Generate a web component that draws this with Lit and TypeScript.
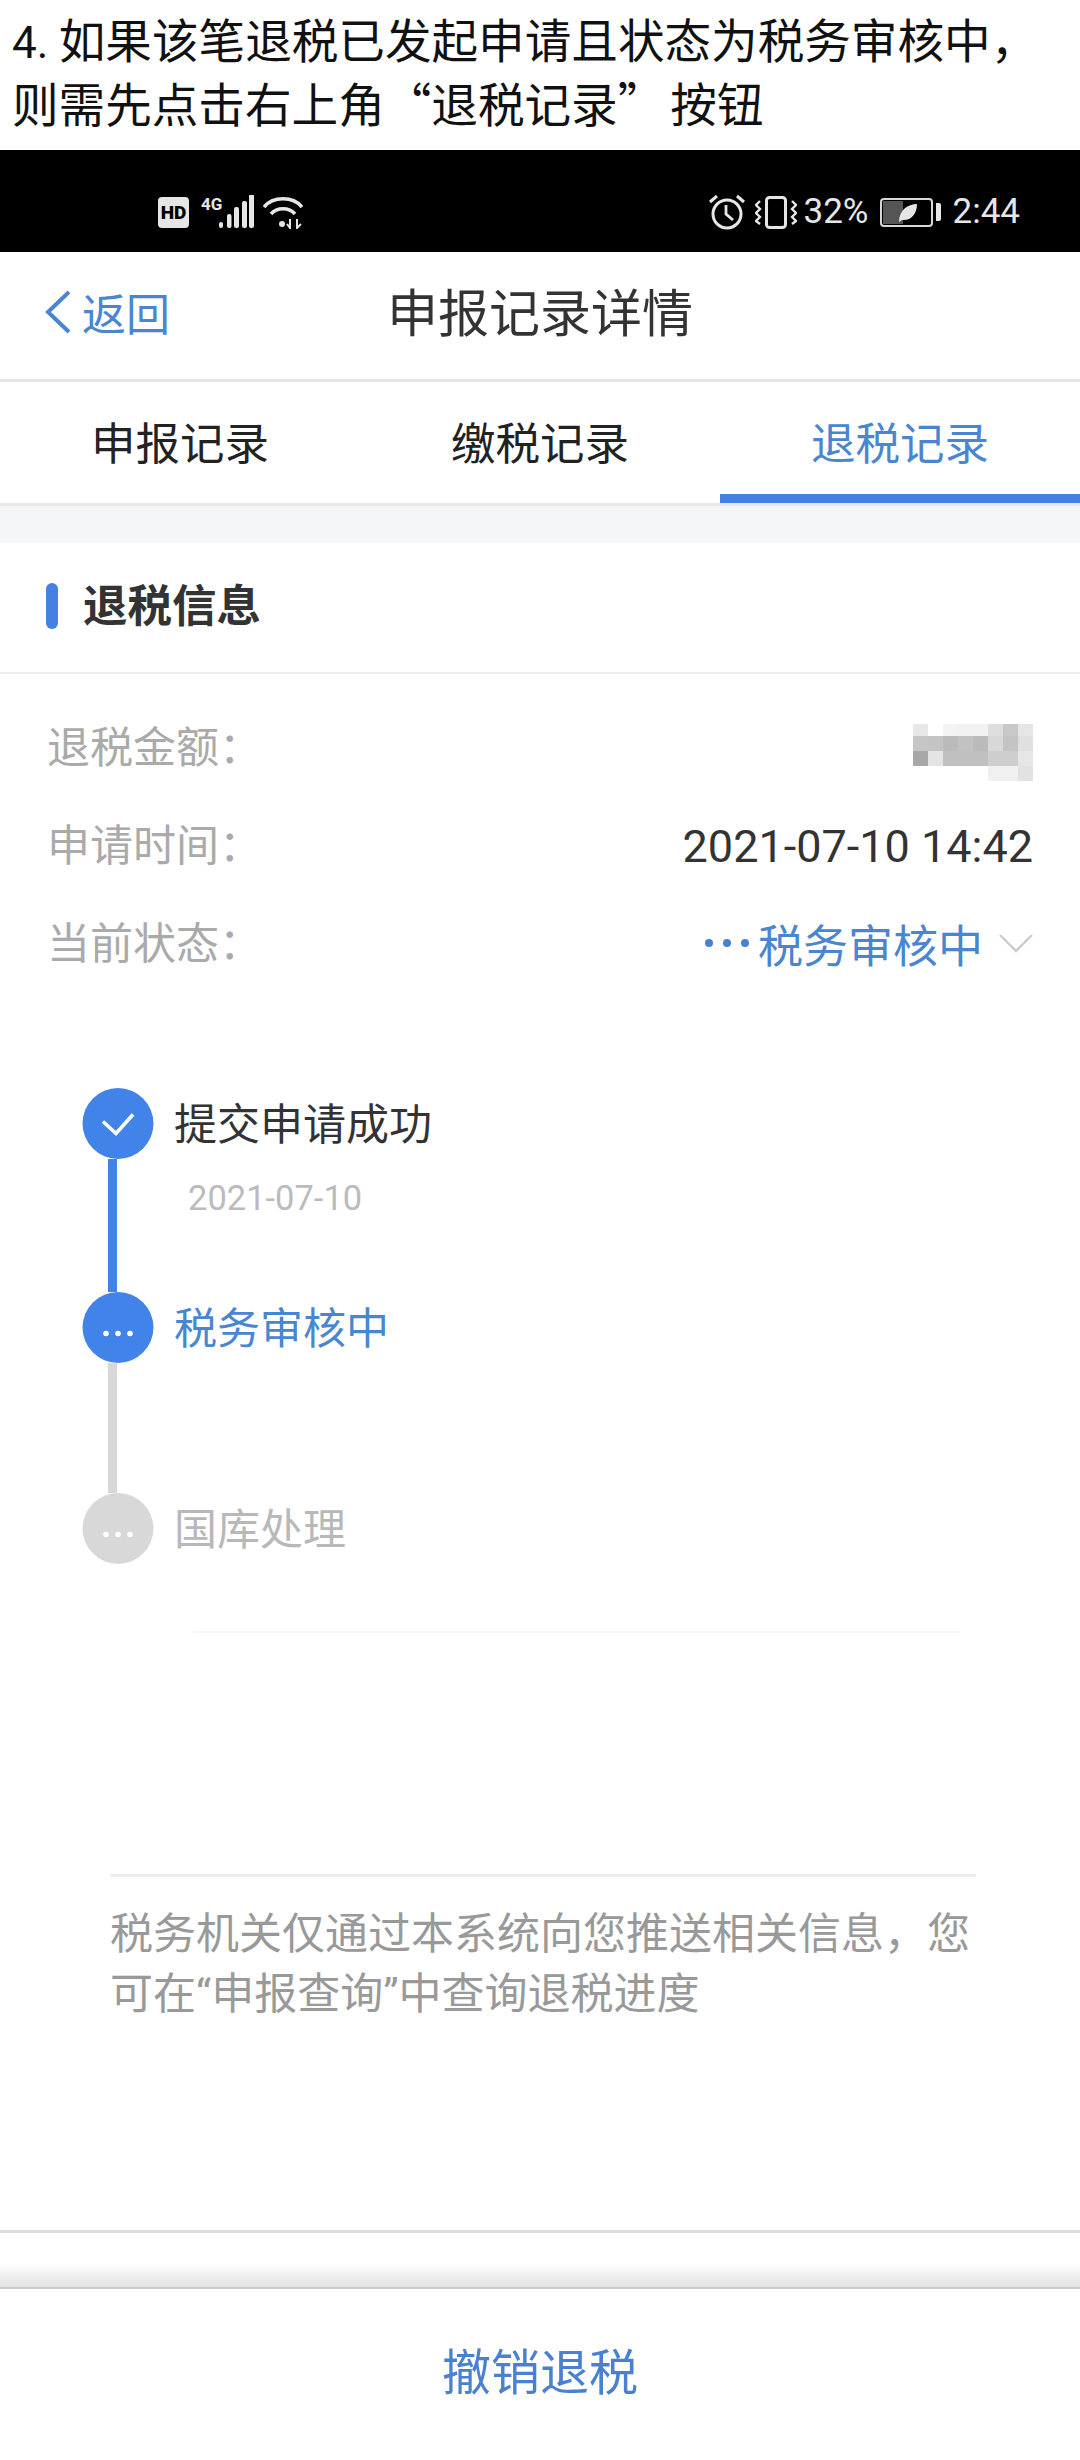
import { LitElement, css, html, svg } from 'lit';
import { customElement } from 'lit/decorators.js';

const mosaic = [
  ['#e8e8e8', '#ffffff', '#f4f4f4', '#f2f2f2', '#f2f2f2', '#dedede', '#c8c8c8', '#e6e6e6'],
  ['#c6c6c6', '#c4c4c4', '#bbbbbb', '#c2c2c2', '#bbbbbb', '#d8d8d8', '#c4c4c4', '#e0e0e0'],
  ['#a8a8a8', '#e4e4e4', '#c0c0c0', '#c0c0c0', '#c0c0c0', '#cecece', '#cecece', '#e6e6e6'],
  ['#ffffff', '#ffffff', '#ffffff', '#ffffff', '#ffffff', '#f0f0f0', '#f0f0f0', '#e2e2e2'],
];

const steps = [
  { label: '提交申请成功', date: '2021-07-10', state: 'done' },
  { label: '税务审核中', date: '', state: 'active' },
  { label: '国库处理', date: '', state: 'todo' },
];

// full-width punctuation, the CJK font draws these
const COLON = '\uFF1A';
const CAPTION_1 = '如果该笔退税已发起申请且状态为税务审核中\uFF0C';
const NOTE = '税务机关仅通过本系统向您推送相关信息\uFF0C您可在“申报查询”中查询退税进度';

const checkIcon = svg`<path d="M-15 -2 L-2 10 L15 -9" fill="none" stroke="#fff" stroke-width="3.6" />`;
const dotsIcon = svg`<circle cx="-12" cy="6" r="2.8" fill="#fff" /><circle cx="0" cy="6" r="2.8" fill="#fff" /><circle cx="12" cy="6" r="2.8" fill="#fff" />`;

@customElement('app-root')
export class AppRoot extends LitElement {
  static styles = css`
    :host {
      display: flex;
      flex-direction: column;
      width: 1080px;
      height: 2460px;
      background: #fff;
      color: #333;
      font-family: 'Noto Sans CJK SC', sans-serif;
    }

    .caption {
      height: 150px;
      box-sizing: border-box;
      padding: 6px 0 0 12px;
      font-size: 46.6px;
      line-height: 64px;
      color: #111;
      white-space: nowrap;
    }
    .caption .num {
      font-family: Roboto, sans-serif;
      font-size: 44px;
      line-height: 0;
    }
    .caption .close {
      margin-right: 6px;
    }

    .status {
      height: 102px;
      box-sizing: border-box;
      padding: 22px 60px 0 158px;
      background: #000;
      color: #e6e6e6;
      display: flex;
      align-items: center;
      font-family: Roboto, sans-serif;
    }
    .status svg {
      display: block;
      flex: none;
    }
    .hd {
      width: 31px;
      height: 31px;
      border-radius: 4px;
      background: #e6e6e6;
      color: #000;
      font-size: 19px;
      font-weight: 900;
      line-height: 31px;
      text-align: center;
      margin-right: 12px;
    }
    .signal {
      margin-right: 9px;
    }
    .spacer {
      flex: 1;
    }
    .vib {
      margin: 0 7px 0 10px;
    }
    .status-text {
      font-size: 35px;
      line-height: 40px;
    }
    .battery {
      margin: 0 12px 0 11px;
    }

    .nav {
      height: 130px;
      box-sizing: border-box;
      padding-bottom: 12px;
      border-bottom: 3px solid #e6e6e6;
      display: grid;
      grid-template-columns: 1fr auto 1fr;
      align-items: center;
    }
    .back {
      display: flex;
      align-items: center;
      gap: 11px;
      padding: 4px 0 0 45px;
      font-size: 44px;
      color: #4a86d0;
    }
    .title {
      font-size: 51px;
      line-height: 60px;
      color: #333;
    }

    .tabs {
      display: grid;
      grid-template-columns: repeat(3, 1fr);
      border-bottom: 3px solid #e8e8e8;
    }
    .tab {
      height: 121px;
      box-sizing: border-box;
      padding-bottom: 4px;
      display: flex;
      align-items: center;
      justify-content: center;
      font-size: 44.5px;
      color: #222;
    }
    .tab.on {
      color: #4a86d0;
      box-shadow: inset 0 -9px 0 #4680e0;
    }
    .gap {
      height: 37px;
      background: #f5f6f8;
    }

    .section {
      height: 131px;
      box-sizing: border-box;
      padding: 0 0 4px 46px;
      border-bottom: 2px solid #eee;
      display: flex;
      align-items: center;
      gap: 25px;
      font-size: 44.5px;
      font-weight: 700;
      color: #333;
    }
    .section i {
      width: 12px;
      height: 46px;
      border-radius: 6px;
      background: #4680e0;
    }
    .section span {
      padding-bottom: 6px;
    }

    .rows {
      padding: 21px 47px 0;
      font-size: 43px;
      color: #aaa;
    }
    .row {
      height: 98px;
      display: flex;
      align-items: center;
      justify-content: space-between;
    }
    .date {
      margin-top: 8px;
      font-family: Roboto, sans-serif;
      font-size: 45px;
      color: #333;
    }
    .mosaic {
      margin-top: 16px;
      display: grid;
      grid-template-columns: repeat(8, 15px);
      grid-template-rows: 12px 15px 15px 15px;
    }
    .state {
      margin-top: 6px;
      display: flex;
      align-items: center;
      color: #4a86d0;
      font-size: 45px;
    }
    .state .dots {
      margin-right: 9px;
    }
    .state .chev {
      margin-left: 16px;
    }

    .timeline {
      margin: 99px 0 0 82px;
    }
    .step {
      display: flex;
      gap: 20px;
      height: 70px;
    }
    .step.done {
      height: 204px;
    }
    .step.active {
      height: 201px;
    }
    .marker {
      width: 72px;
      display: flex;
      flex-direction: column;
    }
    .dot {
      width: 72px;
      height: 71px;
      flex: none;
      display: block;
    }
    .line {
      width: 9px;
      margin-left: 26px;
      flex: 1;
      background: #4283ea;
    }
    .step.active .line {
      background: #d8d8d8;
    }
    .label {
      font-size: 43px;
      line-height: 66px;
      color: #333;
    }
    .step.active .label {
      color: #4a86d0;
    }
    .step.todo .label {
      color: #b8b8b8;
    }
    .when {
      margin: 24px 0 0 14px;
      font-family: Roboto, sans-serif;
      font-size: 34.5px;
      line-height: 40px;
      color: #bbb;
    }

    .faint {
      height: 2px;
      margin: 68px 120px 0 193px;
      background: #f6f6f6;
    }
    .note {
      margin: 241px 104px 0 110px;
      padding-top: 27px;
      border-top: 3px solid #eee;
      font-family: Roboto, 'Noto Sans CJK SC', sans-serif;
      font-size: 43px;
      line-height: 60px;
      color: #999;
    }

    .rule {
      margin-top: 206px;
      height: 3px;
      background: #ddd;
    }
    .shade {
      margin-top: 30px;
      height: 24px;
      background: linear-gradient(#fff, #e2e2e2);
      border-bottom: 2px solid #ccc;
    }
    .cancel {
      flex: 1;
      padding-bottom: 12px;
      display: flex;
      align-items: center;
      justify-content: center;
      font-size: 49px;
      color: #4a80d0;
    }
  `;

  renderStatus() {
    return html`<div class="status">
      <div class="hd">HD</div>
      <svg class="signal" width="53" height="34" viewBox="0 0 53 34" fill="#e6e6e6">
        <text x="0" y="15" font-family="Roboto" font-size="17" font-weight="700">4G</text>
        <rect x="18" y="27" width="4" height="6" rx="2" />
        <rect x="26" y="19" width="4.5" height="14" rx="2" />
        <rect x="33" y="12" width="5" height="21" rx="2" />
        <rect x="41" y="6" width="5" height="27" rx="2" />
        <rect x="48" y="-1" width="5" height="34" rx="2" />
      </svg>
      <svg width="40" height="34" viewBox="0 0 40 34" fill="none" stroke="#e6e6e6" stroke-width="3.6">
        <path d="M1 12 C10 1 30 1 39 12" />
        <path d="M8 19 C14 12 26 12 32 19" />
        <circle cx="19" cy="29" r="3" fill="#e6e6e6" stroke="none" />
        <path d="M27 24 L27 33 L24 29 M34 24 L34 33 L38 29" stroke-width="2" />
      </svg>
      <div class="spacer"></div>
      <svg width="36" height="36" viewBox="0 0 36 36" fill="none" stroke="#e6e6e6" stroke-width="3">
        <circle cx="18" cy="20" r="14" />
        <path d="M17 11 V20 L24 26" stroke-width="2.8" />
        <path d="M1 8 L8 2 M28 2 L35 8" />
      </svg>
      <svg class="vib" width="42" height="33" viewBox="0 0 42 33" fill="none" stroke="#e6e6e6" stroke-width="3">
        <rect x="11.5" y="1.5" width="19" height="30" rx="3" />
        <path d="M5 5 L1 9 L5 13 L1 17 L5 21 L1 25 L5 28" stroke-width="2.4" />
        <path d="M37 5 L41 9 L37 13 L41 17 L37 21 L41 25 L37 28" stroke-width="2.4" />
      </svg>
      <span class="status-text">32%</span>
      <svg class="battery" width="61" height="29" viewBox="0 0 61 29">
        <rect x="1" y="1" width="51" height="27" rx="3" fill="none" stroke="#d8d8d8" stroke-width="2" />
        <rect x="3" y="3" width="20" height="23" fill="#555" />
        <path d="M19 24 C19 12 28 6 37 6 C37 16 31 23 22 22 Z" fill="#e6e6e6" />
        <path d="M56 5 h3 a2 2 0 0 1 2 2 v14 a2 2 0 0 1 -2 2 h-3 Z" fill="#e6e6e6" />
      </svg>
      <span class="status-text">2:44</span>
    </div>`;
  }

  renderStep(step: { label: string; date: string; state: string }, index: number) {
    const color = step.state === 'todo' ? '#d8d8d8' : '#4283ea';
    return html`<div class="step ${step.state}">
      <div class="marker">
        <svg class="dot" viewBox="-36 -35.5 72 71">
          <circle r="35.5" fill=${color} />
          ${step.state === 'done' ? checkIcon : dotsIcon}
        </svg>
        ${index < steps.length - 1 ? html`<div class="line"></div>` : null}
      </div>
      <div>
        <div class="label">${step.label}</div>
        ${step.date ? html`<div class="when">${step.date}</div>` : null}
      </div>
    </div>`;
  }

  render() {
    return html`
      <div class="caption">
        <span class="num">4.</span> ${CAPTION_1}<br />则需先点击右上角“退税记录<span class="close">”</span>按钮
      </div>
      ${this.renderStatus()}
      <div class="nav">
        <div class="back">
          <svg width="26" height="44" viewBox="0 0 26 44" fill="none" stroke="#4a86d0" stroke-width="4">
            <path d="M24 2 L3 22 L24 42" />
          </svg>
          返回
        </div>
        <div class="title">申报记录详情</div>
      </div>
      <div class="tabs">
        <div class="tab">申报记录</div>
        <div class="tab">缴税记录</div>
        <div class="tab on">退税记录</div>
      </div>
      <div class="gap"></div>
      <div class="section"><i></i><span>退税信息</span></div>
      <div class="rows">
        <div class="row">
          <span>退税金额${COLON}</span>
          <div class="mosaic">
            ${mosaic.flat().map((c) => html`<div style="background:${c}"></div>`)}
          </div>
        </div>
        <div class="row">
          <span>申请时间${COLON}</span>
          <span class="date">2021-07-10 14:42</span>
        </div>
        <div class="row">
          <span>当前状态${COLON}</span>
          <div class="state">
            <svg class="dots" width="44" height="8" viewBox="0 0 44 8" fill="#4a80d0">
              <circle cx="4" cy="4" r="4" /><circle cx="22" cy="4" r="4" /><circle cx="40" cy="4" r="4" />
            </svg>
            税务审核中
            <svg class="chev" width="34" height="19" viewBox="0 0 34 19" fill="none" stroke="#ccc" stroke-width="2.4">
              <path d="M1 1 L17 17 L33 1" />
            </svg>
          </div>
        </div>
      </div>
      <div class="timeline">${steps.map((s, i) => this.renderStep(s, i))}</div>
      <div class="faint"></div>
      <div class="note">${NOTE}</div>
      <div class="rule"></div>
      <div class="shade"></div>
      <div class="cancel">撤销退税</div>
    `;
  }
}
